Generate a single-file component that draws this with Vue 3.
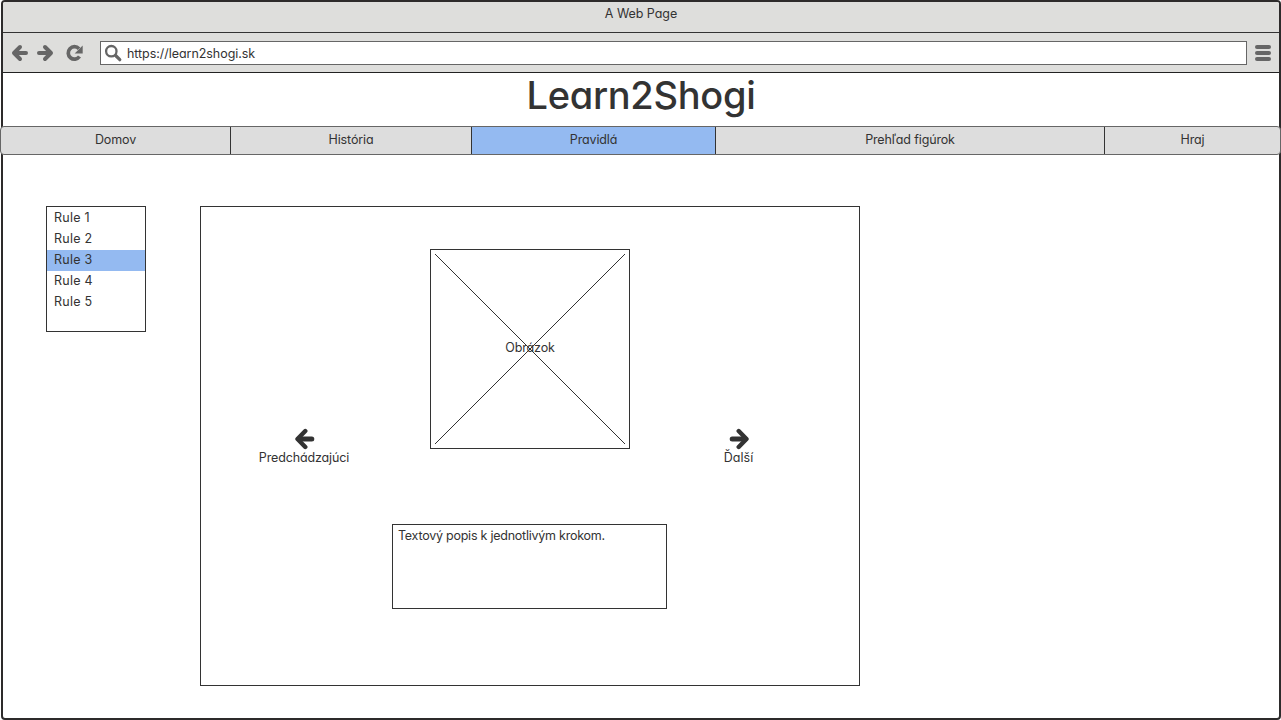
<script setup>
const tabs = [
  { id: 'home', label: 'Domov' },
  { id: 'history', label: 'História' },
  { id: 'rules', label: 'Pravidlá', active: true },
  { id: 'pieces', label: 'Prehľad figúrok' },
  { id: 'play', label: 'Hraj' },
]
const rules = ['Rule 1', 'Rule 2', 'Rule 3', 'Rule 4', 'Rule 5']
const selected = 'Rule 3'
</script>

<template>
  <div class="page">
    <div class="window">
      <header class="titlebar"><span>A Web Page</span></header>
      <div class="toolbar">
        <svg class="nav-icons" width="97" height="39" viewBox="0 0 97 39" fill="none" stroke="#666" stroke-width="4" stroke-linecap="round" stroke-linejoin="round">
          <path d="M17 14l-6 6 6 6M12 20h11" />
          <path d="M42 14l6 6-6 6M47 20H36" />
          <path d="M76 15.700A6.200 6.200 0 1 0 76.500 23.500" stroke-width="3.700" stroke-linecap="butt" />
          <path d="M79.700 12.500v8h-8z" fill="#666" stroke="none" />
        </svg>
        <div class="address">
          <svg width="26" height="22" viewBox="0 0 26 22" fill="none" stroke="#666" stroke-linecap="round">
            <circle cx="10.300" cy="9.200" r="5.200" stroke-width="2.300" />
            <path d="M14.600 13.500l4.200 4.200" stroke-width="3.200" />
          </svg>
          <span class="url">https://learn2shogi.sk</span>
        </div>
        <div class="menu"><i></i><i></i><i></i></div>
      </div>
      <h1><span>Learn2Shogi</span></h1>
    </div>

    <nav class="tabs">
      <div v-for="tab in tabs" :key="tab.id" class="tab" :class="[tab.id, { active: tab.active }]"><span>{{ tab.label }}</span></div>
    </nav>

    <main class="content">
      <ul class="rules">
        <li v-for="rule in rules" :key="rule" :class="{ chosen: rule === selected }"><span>{{ rule }}</span></li>
      </ul>
      <section class="panel">
        <div class="stage">
          <div class="step prev">
            <svg width="22" height="22" viewBox="0 0 22 22" fill="none" stroke="#333" stroke-width="4.400" stroke-linecap="round" stroke-linejoin="round"><path d="M12.300 3L4.500 11l7.800 8" /><path d="M6 11h12.800" stroke-width="5" /></svg>
            <span>Predchádzajúci</span>
          </div>
          <div class="picture">
            <svg width="198" height="198" viewBox="0 0 198 198" stroke="#333" shape-rendering="crispEdges"><path d="M4 4L194 194M194 4L4 194" /></svg>
            <span>Obrázok</span>
          </div>
          <div class="step next">
            <svg width="22" height="22" viewBox="0 0 22 22" fill="none" stroke="#333" stroke-width="4.400" stroke-linecap="round" stroke-linejoin="round"><path d="M10.700 3l7.800 8-7.800 8" /><path d="M17 11H4.200" stroke-width="5" /></svg>
            <span>Ďalší</span>
          </div>
        </div>
        <div class="caption"><span>Textový popis k jednotlivým krokom.</span></div>
      </section>
    </main>
  </div>
</template>

<style>
body { background: #fff; overflow: hidden; }
</style>

<style scoped>
* { box-sizing: border-box; }
.page {
  width: 1281px; height: 720px; display: grid; grid-template: 126px 29px 565px / 1281px;
  font: 12.5px/18px Inter, "Liberation Sans", sans-serif; letter-spacing: -0.14px;
  font-feature-settings: "cv11"; color: #333;
}
.page span { white-space: nowrap; }
.window { grid-row: 1 / 4; grid-column: 1; margin-left: 1px; border: 2px solid #2d2b2b; border-radius: 4px; overflow: hidden; background: #fff; }
.titlebar { height: 31px; background: #dededc; border-bottom: 1px solid #333; text-align: center; padding-top: 3px; letter-spacing: -0.05px; }
.toolbar { height: 40px; background: #dededc; border-bottom: 1px solid #222; display: flex; align-items: center; }
.nav-icons { flex: none; }
.address { width: 1147px; height: 24px; border: 1px solid #666; background: #fff; display: flex; align-items: center; }
.url { letter-spacing: -0.05px; padding-top: 2px; }
.menu { margin-left: 8px; display: grid; gap: 2px; }
.menu i { width: 16px; height: 4px; border-radius: 2px; background: #666; }
h1 { margin: 0; height: 53px; font-size: 38px; line-height: 44px; font-weight: 500; text-align: center; letter-spacing: -0.3px; }
.tabs { grid-row: 2; grid-column: 1; z-index: 1; display: flex; border: 1px solid #666; border-radius: 4px; background: #ddd; overflow: hidden; }
.tab { border-left: 1px solid #333; text-align: center; padding-top: 4px; }
.home { width: 229px; border-left: 0; }
.history { width: 241px; }
.rules.tab { width: 244px; }
.pieces { width: 389px; }
.play { width: 176px; }
.active { background: #94baf1; }
.content { grid-row: 3; grid-column: 1; z-index: 1; display: flex; align-items: flex-start; gap: 54px; padding: 51px 0 0 46px; }
ul.rules { list-style: none; margin: 0; width: 100px; height: 126px; padding: 1px 0 0; border: 1px solid #333; letter-spacing: 0.25px; }
li { height: 21px; line-height: 20px; padding-left: 7px; }
.chosen { background: #94baf1; }
.panel { width: 660px; height: 480px; border: 1px solid #333; padding-top: 42px; }
.stage { display: grid; grid-template-columns: 229px 200px 229px; }
.picture { height: 200px; border: 1px solid #333; display: grid; place-items: center; }
.picture > * { grid-area: 1 / 1; }
.picture span { padding-bottom: 2px; }
.step { display: flex; flex-direction: column; align-items: center; padding-top: 179px; height: 219px; }
.step svg { flex: none; }
.step span { margin-top: -1px; }
.prev { padding-right: 23px; }
.next { padding-right: 12px; }
.next span { letter-spacing: 0; }
.caption { width: 275px; height: 85px; margin: 56px 0 0 191px; border: 1px solid #333; padding: 2px 5px; letter-spacing: -0.24px; }
</style>
